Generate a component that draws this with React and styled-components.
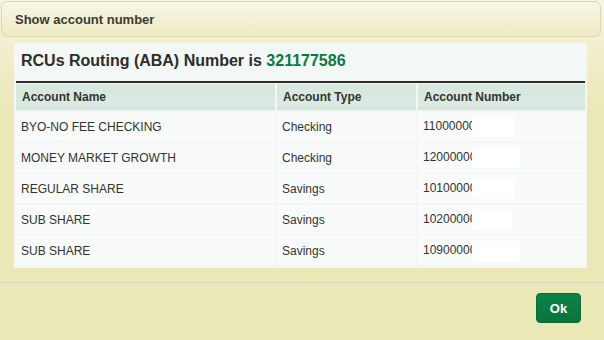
import React from 'react'
import styled, { createGlobalStyle } from 'styled-components'

const GlobalStyle = createGlobalStyle`
    html, body {
        margin: 0;
        padding: 0;
        background: #ebe8b8;
    }
    * {
        box-sizing: border-box;
    }
`

const accounts = [
    { name: 'BYO-NO FEE CHECKING', type: 'Checking', number: '11000000', mask: 42 },
    { name: 'MONEY MARKET GROWTH', type: 'Checking', number: '12000000', mask: 48 },
    { name: 'REGULAR SHARE', type: 'Savings', number: '10100000', mask: 42 },
    { name: 'SUB SHARE', type: 'Savings', number: '10200000', mask: 40 },
    { name: 'SUB SHARE', type: 'Savings', number: '10900000', mask: 48 }
]

const App = () => {
    return (
        <>
            <GlobalStyle />
            <Dialog>
                <TitleBar>Show account number</TitleBar>
                <Body>
                    <Panel>
                        <Heading>
                            RCUs Routing (ABA) Number is <Routing>321177586</Routing>
                        </Heading>
                        <Rule />
                        <Table>
                            <colgroup>
                                <col style={{ width: 259 }} />
                                <col style={{ width: 139 }} />
                                <col style={{ width: 167 }} />
                            </colgroup>
                            <thead>
                                <tr>
                                    <Th>Account Name</Th>
                                    <Th>Account Type</Th>
                                    <Th>Account Number</Th>
                                </tr>
                            </thead>
                            <tbody>
                                {accounts.map((a, i) => (
                                    <tr key={i}>
                                        <Td>{a.name}</Td>
                                        <Td>{a.type}</Td>
                                        <Td>
                                            {a.number}
                                            <Mask style={{ width: a.mask }} />
                                        </Td>
                                    </tr>
                                ))}
                            </tbody>
                        </Table>
                    </Panel>
                </Body>
                <Footer>
                    <OkButton>Ok</OkButton>
                </Footer>
            </Dialog>
        </>
    )
}

export default App

const Dialog = styled.div`
    width: 604px;
    height: 340px;
    padding-top: 1px;
    display: flex;
    flex-direction: column;
    background: linear-gradient(to bottom, #f7f5e2 0px, #f2efcf 45px, #ebe8b8 110px);
    font-family: "Liberation Sans", Arial, sans-serif;
`
const TitleBar = styled.div`
    margin: 0 3px 0 1px;
    height: 36px;
    flex-shrink: 0;
    padding-left: 13px;
    display: flex;
    align-items: center;
    border: 1px solid #dcd8b2;
    border-radius: 6px;
    background: linear-gradient(to bottom, #f8f6e4 0%, #f3f0d6 50%, #eeeac4 100%);
    color: #3a3a36;
    font-size: 13px;
    font-weight: bold;
`
const Body = styled.div`
    padding: 6px 17px 0 14px;
`
const Panel = styled.div`
    width: 573px;
    background: #f3f7f6;
    padding-bottom: 1px;
`
const Heading = styled.div`
    height: 38px;
    padding: 9px 0 0 7px;
    color: #2e2d2a;
    font-size: 16px;
    font-weight: bold;
`
const Routing = styled.span`
    color: #0b7a40;
`
const Rule = styled.div`
    height: 2px;
    margin: 0 2px;
    background: #2b2a26;
`
const Table = styled.table`
    width: 573px;
    table-layout: fixed;
    border-spacing: 2px;
    margin-top: -1px;
    font-size: 12px;
    color: #333330;
`
const Th = styled.th`
    height: 26px;
    padding: 0 6px;
    text-align: left;
    font-weight: bold;
    background: linear-gradient(to bottom, #d6e7de 0%, #dbeae2 80%, #d2e3da 100%);
`
const Td = styled.td`
    height: 29px;
    padding: 1px 5px 0;
    background: #f8fbfa;
    white-space: nowrap;
    overflow: hidden;
`
const Mask = styled.span`
    display: inline-block;
    height: 20px;
    margin-left: -4px;
    vertical-align: middle;
    background: #ffffff;
`
const Footer = styled.div`
    margin-top: 14px;
    border-top: 1px solid #d8d4bf;
    display: flex;
    justify-content: flex-end;
    padding: 10px 23px 0 0;
`
const OkButton = styled.button`
    width: 45px;
    height: 30px;
    border: 1px solid #0a6a36;
    border-radius: 4px;
    background: linear-gradient(to bottom, #0d8246 0%, #0a743d 100%);
    color: #ffffff;
    font-family: "Liberation Sans", Tahoma, sans-serif;
    font-size: 13px;
    font-weight: bold;
    cursor: pointer;
`
